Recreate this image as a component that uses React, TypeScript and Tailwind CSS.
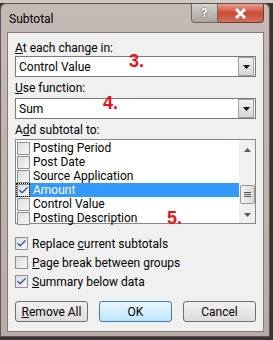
import { Check } from 'lucide-react';

const FONT = { fontFamily: 'Roboto, "Noto Sans", sans-serif' };
const RED = { fontFamily: '"Liberation Sans", Arial, sans-serif' };

function Box({ checked }: { checked?: boolean }) {
  return (
    <span className="w-[13px] h-[13px] border border-[#8e8f8f] bg-gradient-to-br from-[#dcdcdc] to-[#f8f8f8] flex items-center justify-center shrink-0">
      {checked && <Check className="w-[11px] h-[11px] text-[#3d5a9e]" strokeWidth={3} />}
    </span>
  );
}

function Combo({ value }: { value: string }) {
  return (
    <div className="h-[21px] bg-white border border-[#7a7a7a] flex items-center">
      <span className="flex-1 pl-[3px] leading-[14px]">{value}</span>
      <span className="w-[16px] h-[19px] mr-px bg-gradient-to-b from-[#f2f2f2] to-[#d6d6d6] border border-[#a0a0a0] flex items-center justify-center">
        <svg width="7" height="4" viewBox="0 0 7 4"><path d="M0 0h7L3.5 4z" fill="#000" /></svg>
      </span>
    </div>
  );
}

const rows = ['Posting Period', 'Post Date', 'Source Application', 'Amount', 'Control Value', 'Posting Description'];

function Btn({ label, ul, focus }: { label: string; ul?: string; focus?: boolean }) {
  const rest = ul ? label.slice(1) : label;
  return (
    <div
      className={`w-[73px] h-[21px] rounded-[3px] border flex items-center justify-center leading-[14px] ${
        focus ? 'border-[#3c7fb1] bg-gradient-to-b from-[#eaf6fd] to-[#bee6fd]' : 'border-[#707070] bg-gradient-to-b from-[#f2f2f2] to-[#dddddd]'
      }`}
    >
      {ul && <span className="underline">{ul}</span>}
      {rest}
    </div>
  );
}

export default function App() {
  return (
    <div className="w-[273px] h-[340px] bg-[#3b3431] relative overflow-hidden" style={FONT}>
      <div className="h-[3px] bg-[#cfcac6]" />
      <div className="w-[270px] h-[334px] bg-gradient-to-b from-[#c6bab6] to-[#b8aca7] border border-[#5e5551] rounded-t-[6px] flex flex-col">
        {/* Title bar */}
        <div className="h-[28px] flex items-start justify-between">
          <span className="pl-[8px] pt-[8px] text-[12px] text-black leading-[14px]">Subtotal</span>
          <div className="flex mr-[5px]">
            <div className="w-[27px] h-[19px] rounded-bl-[4px] border border-t-0 border-[#6d6662] bg-gradient-to-b from-[#d6d2cf] to-[#a9a4a0] flex items-center justify-center text-white font-bold text-[13px] leading-[14px]" style={{ textShadow: '0 0 2px #333' }}>?</div>
            <div className="w-[46px] h-[19px] rounded-br-[4px] border border-t-0 border-l-0 border-[#6d3a32] bg-gradient-to-b from-[#e5a090] via-[#c94a34] to-[#d2715c] flex items-center justify-center">
              <svg width="13" height="11" viewBox="0 0 13 11"><path d="M2 1l9 9M11 1l-9 9" stroke="#fff" strokeWidth="3" /></svg>
            </div>
          </div>
        </div>
        {/* Client */}
        <div className="ml-[6px] mr-[5px] h-[300px] bg-[#f0f0f0] border border-[#857c78] relative px-[7px] text-[12px] leading-[14px] text-black">
          <div className="pt-[8px] h-[23px]"><span className="underline">A</span>t each change in:</div>
          <Combo value="Control Value" />
          <div className="pt-[4px] h-[21px]"><span className="underline">U</span>se function:</div>
          <Combo value="Sum" />
          <div className="pt-[4px] h-[20px]">A<span className="underline">d</span>d subtotal to:</div>
          <div className="h-[85px] bg-white border border-[#828790] flex">
            <div className="flex-1 pt-px">
              {rows.map((r) => (
                <div key={r} className="h-[14px] flex items-center">
                  <div className={`flex items-center h-[14px] ${r === 'Amount' ? 'outline-1 outline-dotted outline-black -outline-offset-1' : ''}`}>
                    <span className="ml-px"><Box checked={r === 'Amount'} /></span>
                  </div>
                  <span className={`h-[14px] flex-1 pl-[3px] leading-[14px] ${r === 'Amount' ? 'bg-[#3399ff] text-white' : ''}`}>{r}</span>
                </div>
              ))}
            </div>
            <div className="w-[16px] bg-[#f0f0f0] flex flex-col items-center">
              <div className="h-[16px] flex items-center justify-center mt-[2px]">
                <svg width="7" height="4" viewBox="0 0 7 4"><path d="M0 4h7L3.5 0z" fill="#5a5a5a" /></svg>
              </div>
              <div className="mt-[27px] w-[15px] h-[19px] rounded-[2px] border border-[#979797] bg-gradient-to-r from-[#f4f4f4] to-[#d8d8d8] flex flex-col items-center justify-center gap-px">
                <span className="w-[7px] h-px bg-[#555]" />
                <span className="w-[7px] h-px bg-[#555]" />
                <span className="w-[7px] h-px bg-[#555]" />
              </div>
              <div className="mt-[3px] h-[16px] flex items-center justify-center">
                <svg width="7" height="4" viewBox="0 0 7 4"><path d="M0 0h7L3.5 4z" fill="#5a5a5a" /></svg>
              </div>
            </div>
          </div>
          <div className="mt-[13px] flex flex-col gap-[6px]">
            <div className="h-[13px] flex items-center gap-[4px]"><Box checked /><span>Replace <span className="underline">c</span>urrent subtotals</span></div>
            <div className="h-[13px] flex items-center gap-[4px]"><Box /><span><span className="underline">P</span>age break between groups</span></div>
            <div className="h-[13px] flex items-center gap-[4px]"><Box checked /><span><span className="underline">S</span>ummary below data</span></div>
          </div>
          <div className="mt-[13px] flex justify-between">
            <Btn label="Remove All" ul="R" />
            <Btn label="OK" focus />
            <Btn label="Cancel" />
          </div>
          {/* annotations */}
          <span className="absolute left-[121px] top-[19px] text-[18px] font-bold text-[#e8141c] leading-[18px]" style={RED}>3.</span>
          <span className="absolute left-[95px] top-[61px] text-[18px] font-bold text-[#e8141c] leading-[18px]" style={RED}>4.</span>
          <span className="absolute left-[159px] top-[176px] text-[18px] font-bold text-[#e8141c] leading-[18px]" style={RED}>5.</span>
        </div>
      </div>
    </div>
  );
}
